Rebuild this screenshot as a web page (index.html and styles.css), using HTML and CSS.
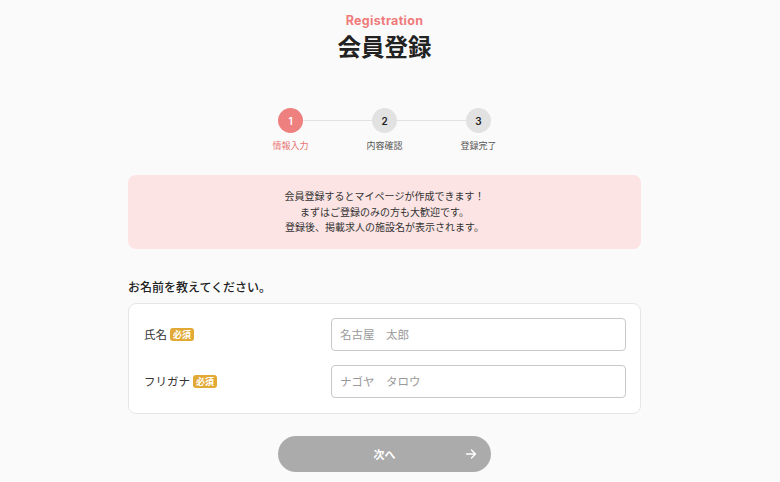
FILE: index.html
```html
<!DOCTYPE html>
<html lang="ja">
<head>
<meta charset="utf-8">
<link rel="stylesheet" href="styles.css">
</head>
<body>
<main class="page">
  <header class="head">
    <p class="eyebrow">Registration</p>
    <h1 class="title">会員登録</h1>
  </header>

  <ol class="steps">
    <li class="step active"><span class="dot">1</span><span class="label">情報入力</span></li>
    <li class="bar"></li>
    <li class="step"><span class="dot">2</span><span class="label">内容確認</span></li>
    <li class="bar"></li>
    <li class="step"><span class="dot">3</span><span class="label">登録完了</span></li>
  </ol>

  <div class="notice">
    <p>会員登録するとマイページが作成できます！</p>
    <p>まずはご登録のみの方も大歓迎です。</p>
    <p>登録後、掲載求人の施設名が表示されます。</p>
  </div>

  <h2 class="section">お名前を教えてください。</h2>

  <div class="card">
    <div class="row">
      <label class="field">氏名<span class="req">必須</span></label>
      <input class="input" type="text" placeholder="名古屋　太郎">
    </div>
    <div class="row">
      <label class="field">フリガナ<span class="req">必須</span></label>
      <input class="input" type="text" placeholder="ナゴヤ　タロウ">
    </div>
  </div>

  <div class="actions">
    <button class="next" type="button">次へ
      <svg class="arrow" viewBox="0 0 12 12" width="12" height="12"><path d="M1.5 6h9M6.5 2l4 4-4 4" fill="none" stroke="#fff" stroke-width="1.4" stroke-linecap="round" stroke-linejoin="round"/></svg>
    </button>
  </div>
</main>
</body>
</html>
```

FILE: styles.css
```css
* { box-sizing: border-box; }
html, body { margin: 0; padding: 0; }
body {
  background: #fafafa;
  font-family: "Noto Sans CJK JP", "Noto Sans", sans-serif;
  color: #333;
  padding-right: 11px;
}
.page {
  width: 513px;
  margin: 0 auto;
  padding-top: 12px;
}
.head { text-align: center; }
.eyebrow {
  margin: 0;
  font-family: "Inter", "Noto Sans", sans-serif;
  font-weight: 700;
  font-size: 12.5px;
  line-height: 17px;
  color: #ef7a7a;
  letter-spacing: 0.3px;
}
.title {
  margin: 2px 0 0;
  font-size: 23.5px;
  line-height: 30px;
  font-weight: 700;
  color: #222;
}
.steps {
  list-style: none;
  margin: 47px 0 0;
  padding: 0;
  display: flex;
  justify-content: center;
  align-items: flex-start;
}
.step {
  width: 25px;
  display: flex;
  flex-direction: column;
  align-items: center;
}
.dot {
  width: 25px;
  height: 25px;
  border-radius: 50%;
  background: #e2e2e2;
  color: #222;
  font-family: "Inter", sans-serif;
  font-weight: 600;
  font-size: 10px;
  display: flex;
  align-items: center;
  justify-content: center;
}
.label {
  margin-top: 6px;
  font-size: 9px;
  line-height: 14px;
  white-space: nowrap;
  color: #555;
}
.step.active .dot { background: #ef8080; color: #fff; }
.step.active .label { color: #e87272; }
.bar {
  width: 69px;
  height: 1px;
  background: #e2e2e2;
  margin-top: 12px;
}
.notice {
  margin-top: 22px;
  background: #fce4e4;
  border-radius: 8px;
  padding: 13px 0 14px;
  text-align: center;
}
.notice p {
  margin: 0;
  font-size: 10px;
  line-height: 15.5px;
  color: #333;
}
.section {
  margin: 29px 0 0;
  font-size: 12px;
  line-height: 18px;
  font-weight: 500;
  color: #222;
}
.card {
  margin-top: 7px;
  background: #fff;
  border: 1px solid #e6e6e6;
  border-radius: 8px;
  padding: 14px 14px 15px 15px;
  display: flex;
  flex-direction: column;
  gap: 14px;
}
.row {
  display: flex;
  align-items: center;
  justify-content: space-between;
}
.field {
  font-size: 11.5px;
  color: #333;
  display: flex;
  align-items: center;
  gap: 3px;
}
.req {
  background: #e2a934;
  color: #fff;
  font-size: 9px;
  font-weight: 700;
  line-height: 13px;
  padding: 0 3px;
  border-radius: 3px;
}
.input {
  width: 295px;
  height: 33px;
  border: 1px solid #c9c9c9;
  border-radius: 4px;
  background: #fff;
  padding: 0 8px;
  font-family: inherit;
  font-size: 11.5px;
  color: #333;
  outline: none;
}
.input::placeholder { color: #9a9a9a; }
.actions {
  margin-top: 22px;
  display: flex;
  justify-content: center;
}
.next {
  position: relative;
  width: 213px;
  height: 36px;
  border: none;
  border-radius: 18px;
  background: #ababab;
  color: #fff;
  font-family: inherit;
  font-size: 11px;
  font-weight: 700;
  display: flex;
  align-items: center;
  justify-content: center;
}
.arrow {
  position: absolute;
  right: 14px;
  top: 12px;
}
```
